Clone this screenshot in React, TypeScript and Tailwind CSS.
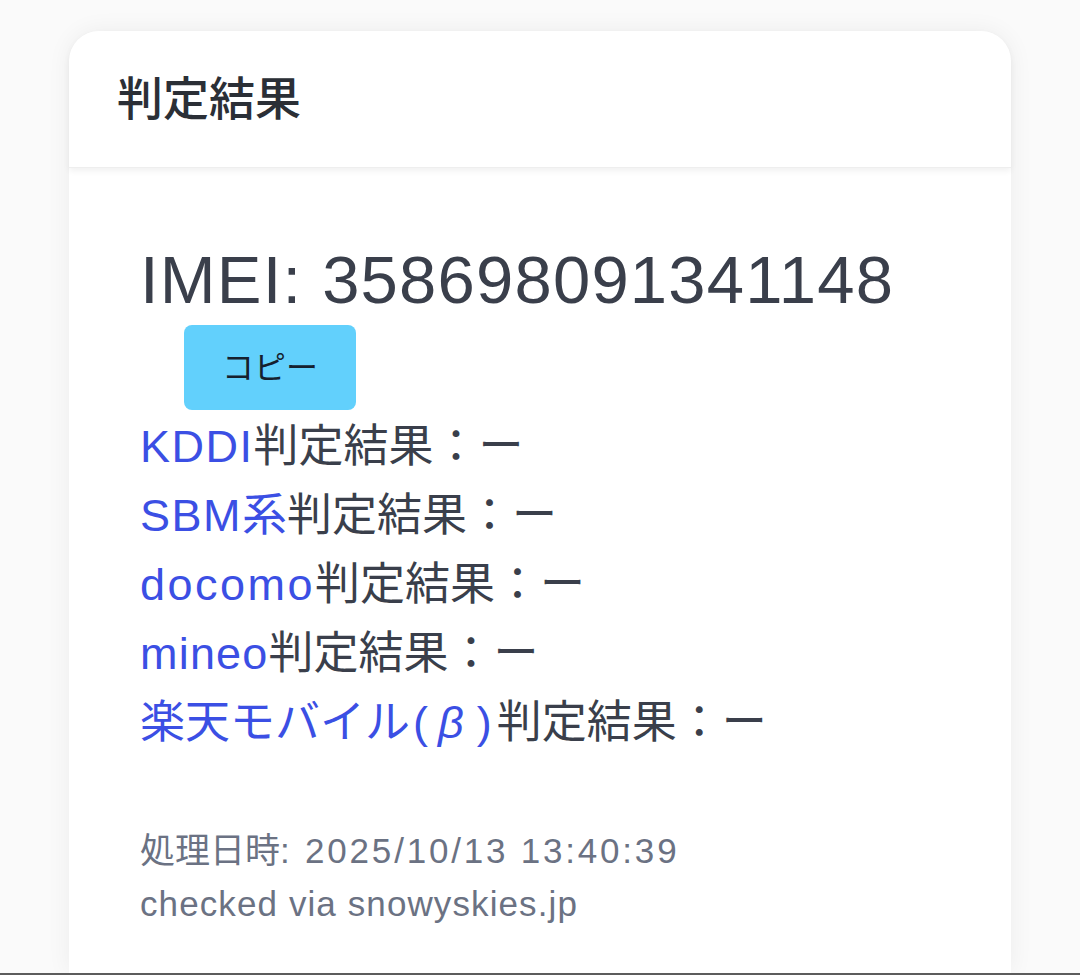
import React from "react";

const font = {
  fontFamily: '"Liberation Sans", "Noto Sans CJK JP", sans-serif',
};

const rows: React.ReactNode[] = [
  <span className="tracking-[1.5px]">KDDI</span>,
  <span>
    <span className="tracking-[1.5px]">SBM</span>系
  </span>,
  <span className="tracking-[2.5px]">docomo</span>,
  <span className="tracking-[1.2px]">mineo</span>,
  <span>
    楽天モバイル<span className="ml-[3px]">(</span>
    <span className="ml-[10px] mr-[13px] italic">β</span>
    <span className="mr-[5px]">)</span>
  </span>,
];

export default function App() {
  return (
    <div
      className="h-[975px] w-[1080px] overflow-hidden bg-[#fafafa] flex flex-col"
      style={font}
    >
      <div className="flex-1 min-h-0 pt-[31px] px-[69px]">
        <div className="h-full bg-white rounded-t-[30px] shadow-[0_0_24px_rgba(0,0,0,0.06)] flex flex-col">
          <div className="h-[137px] flex items-center pl-[48px] rounded-t-[30px] shadow-[0_3px_6px_rgba(0,0,0,0.06)] border-b border-[#eeeeee]">
            <span className="text-[46px] text-[#2b2f36] leading-none font-medium">判定結果</span>
          </div>
          <div className="pl-[71px] pt-[72px]">
            <div className="text-[67px] leading-[79px] text-[#3a3f4b] tracking-[1.2px] whitespace-nowrap">
              IMEI: 358698091341148
            </div>
            <div className="mt-[6px] pl-[44px]">
              <button className="w-[172px] h-[85px] rounded-[8px] bg-[#62d0fc] text-[32px] text-[#15202e] flex items-center justify-center">
                コピー
              </button>
            </div>
            <div className="mt-[2px] flex flex-col">
              {rows.map((r, i) => (
                <div key={i} className="text-[45px] leading-[69px] text-[#3a3f4b] whitespace-nowrap">
                  <span className="text-[#3b4fe4]">{r}</span>判定結果：ー
                </div>
              ))}
            </div>
            <div className="mt-[67px] text-[35px] leading-[53px] text-[#6b7283] whitespace-nowrap">
              <div>
                処理日時<span className="tracking-[2.8px]">: 2025/10/13 13:40:39</span>
              </div>
              <div className="tracking-[1.1px]">checked via snowyskies.jp</div>
            </div>
          </div>
        </div>
      </div>
      <div className="h-[2px] bg-[#5c5c5c]" />
    </div>
  );
}
